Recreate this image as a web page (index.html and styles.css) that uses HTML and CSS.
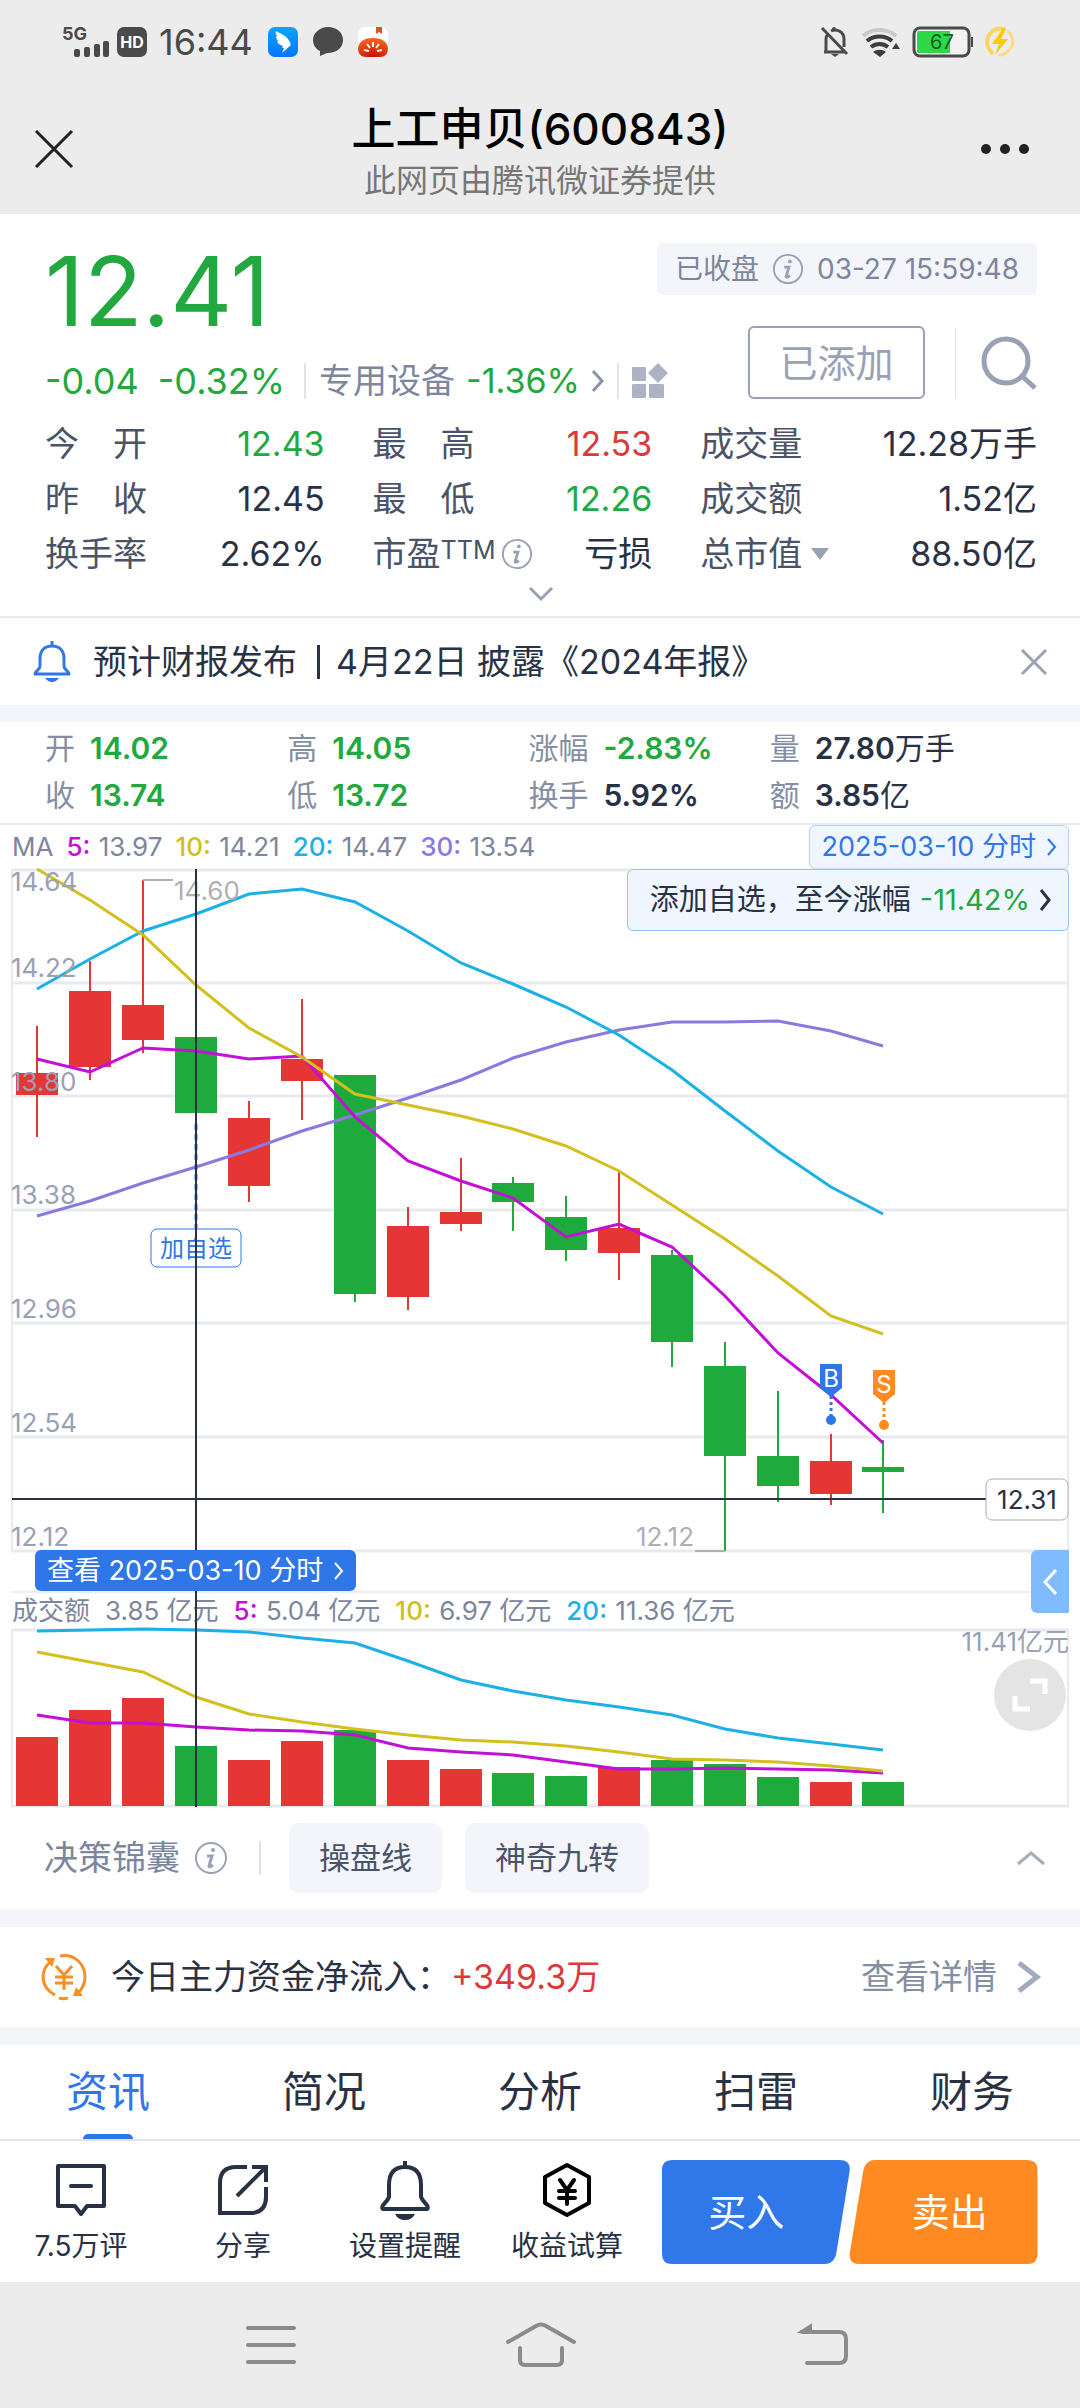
FILE: index.html
```html
<!DOCTYPE html>
<html lang="zh-CN">
<head>
<meta charset="utf-8">
<meta name="viewport" content="width=device-width">
<title>上工申贝(600843)</title>
<link rel="stylesheet" href="styles.css">
</head>
<body>
<header class="top">
  <div class="status">
    <div class="status-left">
      <svg class="signal" width="48" height="34" viewBox="0 0 48 34" fill="#4a4a4a"><text x="0" y="15" class="net">5G</text><rect x="12" y="24" width="6" height="8" rx="2"/><rect x="22" y="22" width="6" height="10" rx="2"/><rect x="32" y="19" width="6" height="13" rx="2"/><rect x="41" y="16" width="6" height="16" rx="2"/></svg>
      <span class="hd">HD</span>
      <span class="time">16:44</span>
      <svg width="30" height="30" viewBox="0 0 30 30"><defs><linearGradient id="bl" x2="0" y2="1"><stop stop-color="#0ba4ff"/><stop offset="1" stop-color="#0575ff"/></linearGradient></defs><rect width="30" height="30" rx="7" fill="url(#bl)"/><path fill="#fff" d="M8 4c3 2 9 4 12 8 2 3 3 4 2 5l1 1-9 8 2-5h-2l1-2c-3-1-5-2-6-5l2 1c-2-2-3-4-3-6l2 1c-2-2-3-4-2-6z"/></svg>
      <svg width="30" height="30" viewBox="0 0 30 30"><path fill="#4a4a4a" d="M15 0C7 0 0 6 0 13c0 5 3 9 7 11v5l7-3h1c8 0 15-5 15-13S23 0 15 0z"/></svg>
      <svg width="30" height="30" viewBox="0 0 30 30"><defs><radialGradient id="tm" cx=".5" cy="1" r=".9"><stop stop-color="#c60c00"/><stop offset="1" stop-color="#f2601c"/></radialGradient></defs><rect width="30" height="30" rx="7" fill="#fff"/><path d="M0 21C1 14 7 11 15 11s14 3 15 10c0 6-3 9-8 9H8c-5 0-8-3-8-9z" fill="url(#tm)"/><path d="M18 0h6v7l-3-2-3 2z" fill="#d9532c"/><path d="M15 15v5M9 17l3 4M21 17l-3 4M6 23l5 1M24 23l-5 1" stroke="#fff" stroke-width="2"/></svg>
    </div>
    <div class="status-right">
      <svg width="28" height="30" viewBox="0 0 28 30" fill="none" stroke="#4a4a4a" stroke-width="3"><path d="M3 25h21M5 24V12c0-2 1-4 2-5M10 4c6-3 13 1 13 8v8M1 1l25 26"/><path d="M10 27h8l-4 3z" fill="#4a4a4a" stroke="none"/><circle cx="13" cy="2" r="2" fill="#4a4a4a" stroke="none"/></svg>
      <svg width="40" height="30" viewBox="0 0 40 30" fill="none" stroke-width="4"><path d="M2 9c9-8 24-8 33 0" stroke="#c9c9c9"/><path d="M6 14c7-6 18-6 25 0M10 20c5-4 12-4 17 0" stroke="#3c3c3c"/><path d="M12 25c4-3 9-3 13 0l-6 5zM31 22l4-6 4 6z" fill="#3c3c3c"/></svg>
      <svg width="60" height="30" viewBox="0 0 60 30"><rect x="1" y="1" width="55" height="28" rx="6" fill="#f2f2f2" stroke="#4a4a4a" stroke-width="3"/><path d="M4 6q0-2 2-2h31v22H6q-2 0-2-2z" fill="#2bd845"/><rect x="58" y="10" width="2" height="10" fill="#4a4a4a"/><text x="17" y="22" class="batt">67</text></svg>
      <svg width="30" height="30" viewBox="0 0 30 30" fill="none"><path d="M18 2C10 0 2 7 2 15c0 5 3 9 6 12" stroke="#fbd65c" stroke-width="4"/><path d="M22 4c6 4 8 11 3 18-3 4-7 6-11 6" stroke="#fbdc80" stroke-width="3"/><path d="M19 0 7 17h7l-4 11 13-16h-7l5-10z" fill="#fecb00"/></svg>
    </div>
  </div>
  <div class="titlebar">
    <button class="plain" aria-label="关闭"><svg width="38" height="38" viewBox="0 0 38 38" stroke="#222" stroke-width="3"><path d="M1 1l36 36M37 1 1 37"/></svg></button>
    <div class="titles"><h1>上工申贝(600843)</h1><p>此网页由腾讯微证券提供</p></div>
    <button class="plain" aria-label="更多"><svg width="50" height="12" viewBox="0 0 50 12" fill="#222"><circle cx="6" cy="6" r="5"/><circle cx="25" cy="6" r="5"/><circle cx="44" cy="6" r="5"/></svg></button>
  </div>
</header>

<main>
<section class="quote">
  <div class="quote-top">
    <div class="quote-main">
      <div class="price">12.41</div>
      <div class="change">
        <span class="chg down">-0.04</span><span class="chg down">-0.32%</span>
        <a class="sector" href="#sector">专用设备 <span class="down">-1.36%</span>
          <svg width="14" height="24" viewBox="0 0 14 24" fill="none" stroke="#8a92a8" stroke-width="3"><path d="M2 2l9 10-9 10"/></svg></a>
        <button class="plain sep" aria-label="板块"><svg width="38" height="36" viewBox="0 0 38 36" fill="#adb3c4"><rect x="1" y="4" width="14" height="14" rx="1"/><path d="M27 0l10 10-10 10-10-10z"/><rect x="1" y="21" width="14" height="14" rx="1"/><rect x="18" y="21" width="15" height="14" rx="1"/></svg></button>
      </div>
    </div>
    <div class="quote-side">
      <div class="closed">已收盘 <svg class="info" width="32" height="32" viewBox="0 0 34 34"><use href="#i-info"/></svg> 03-27 15:59:48</div>
      <div class="side-row">
        <button class="added">已添加</button>
        <button class="plain search" aria-label="搜索"><svg width="56" height="54" viewBox="0 0 56 54" fill="none" stroke="#9aa1b5" stroke-width="5"><circle cx="25" cy="25" r="22"/><path d="M41 40l13 12"/></svg></button>
      </div>
    </div>
  </div>
  <dl class="facts">
    <div><dt>今　开</dt><dd class="down">12.43</dd></div>
    <div><dt>最　高</dt><dd class="up">12.53</dd></div>
    <div><dt>成交量</dt><dd>12.28万手</dd></div>
    <div><dt>昨　收</dt><dd>12.45</dd></div>
    <div><dt>最　低</dt><dd class="down">12.26</dd></div>
    <div><dt>成交额</dt><dd>1.52亿</dd></div>
    <div><dt>换手率</dt><dd>2.62%</dd></div>
    <div><dt>市盈<sup>TTM</sup> <svg class="info" width="32" height="32" viewBox="0 0 34 34"><use href="#i-info"/></svg></dt><dd>亏损</dd></div>
    <div><dt>总市值 <svg class="tri" width="18" height="12" viewBox="0 0 18 12"><path d="M0 0h18L9 12z" fill="#9aa1b5"/></svg></dt><dd>88.50亿</dd></div>
  </dl>
  <button class="plain expand" aria-label="展开"><svg width="24" height="14" viewBox="0 0 24 14" fill="none" stroke="#9aa1b5" stroke-width="3"><path d="M1 1l11 11L23 1"/></svg></button>
</section>

<section class="notice">
  <svg width="40" height="42" viewBox="0 0 40 42" fill="none" stroke="#2f77e8" stroke-width="3"><path d="M20 0v4M8 18C8 9 13 5 20 5s12 4 12 13v7c0 4 5 5 5 8H3c0-3 5-4 5-8z" stroke-linejoin="round"/><path d="M13 37h14q-3 4-7 4t-7-4z" fill="#2f77e8" stroke="none"/></svg>
  <a href="#report">预计财报发布<i></i>4月22日 披露《2024年报》</a>
  <button class="plain" aria-label="关闭提醒"><svg width="26" height="26" viewBox="0 0 26 26" stroke="#9aa1b5" stroke-width="3"><path d="M1 1l24 24M25 1 1 25"/></svg></button>
</section>

<section class="day">
  <div><span>开</span><b class="down">14.02</b></div>
  <div><span>高</span><b class="down">14.05</b></div>
  <div><span>涨幅</span><b class="down">-2.83%</b></div>
  <div><span>量</span><b>27.80<em>万手</em></b></div>
  <div><span>收</span><b class="down">13.74</b></div>
  <div><span>低</span><b class="down">13.72</b></div>
  <div><span>换手</span><b>5.92%</b></div>
  <div><span>额</span><b>3.85<em>亿</em></b></div>
</section>

<section class="chart">
  <div class="legend ma">
    <span>MA</span><span><b class="c5">5:</b> 13.97</span><span><b class="c10">10:</b> 14.21</span><span><b class="c20">20:</b> 14.47</span><span><b class="c30">30:</b> 13.54</span>
    <a class="date-link" href="#minute">2025-03-10 分时 <svg width="10" height="18" viewBox="0 0 10 18" fill="none" stroke="currentColor" stroke-width="2"><path d="M1 1l7 8-7 8"/></svg></a>
  </div>
  <div class="plot">
    <svg class="kline" viewBox="12 869 1057 681">
      <path class="grid" d="M12 870h1057M12 983h1057M12 1096h1057M12 1210h1057M12 1323h1057M12 1437h1057M12 1551h1057"/>
      <path class="frame" d="M12 869v682M1068 869v682"/>
      <path class="wick-r" d="M37 1026v111M90 961v119M143 880v173M249 1101v101M302 999v121M408 1207v103M461 1158v73M619 1171v109M831 1434v71"/>
      <path class="wick-g" d="M196 1029v84M355 1076v226M513 1177v54M566 1196v65M672 1250v117M725 1342v209M778 1391v111M883 1440v73"/>
      <path class="body-r" d="M16 1073h42v22h-42zM69 991h42v76h-42zM122 1005h42v35h-42zM228 1118h42v68h-42zM281 1059h42v22h-42zM387 1226h42v71h-42zM440 1212h42v12h-42zM598 1228h42v25h-42zM810 1461h42v33h-42z"/>
      <path class="body-g" d="M175 1037h42v76h-42zM334 1075h42v219h-42zM492 1183h42v19h-42zM545 1217h42v33h-42zM651 1255h42v87h-42zM704 1366h42v90h-42zM757 1456h42v30h-42zM862 1467h42v5h-42z"/>
      <polyline class="line c30" points="37,1216 90,1201 143,1183 196,1167 249,1150 302,1131 355,1115 408,1098 461,1080 513,1058 566,1042 619,1030 672,1022 725,1022 778,1021 831,1031 883,1046"/>
      <polyline class="line c20" points="37,989 90,959 143,931 196,914 249,894 302,889 355,902 408,931 461,963 513,984 566,1007 619,1035 672,1070 725,1111 778,1151 831,1187 883,1214"/>
      <polyline class="line c5" points="37,1059 90,1072 143,1048 196,1051 249,1059 302,1056 355,1117 408,1161 461,1181 513,1198 566,1237 619,1224 672,1247 725,1296 778,1353 831,1395 883,1443"/>
      <polyline class="line c10" points="37,869 90,900 143,935 196,985 249,1028 302,1057 355,1094 408,1105 461,1116 513,1129 566,1146 619,1171 672,1205 725,1239 778,1276 831,1316 883,1334"/>
      <path d="M143 880h30M695 1551h30" stroke="#b0b0b0" stroke-width="2"/>
      <g class="mark"><text x="174" y="900">14.60</text><text x="694" y="1546" text-anchor="end">12.12</text></g>
      <g class="axis"><text x="11" y="891">14.64</text><text x="11" y="977">14.22</text><text x="11" y="1091">13.80</text><text x="11" y="1204">13.38</text><text x="11" y="1318">12.96</text><text x="11" y="1432">12.54</text><text x="11" y="1546">12.12</text></g>
      <path d="M196 1124v104" stroke="#2f77e8" stroke-width="3" stroke-dasharray="6 4"/>
      <rect x="151" y="1229" width="90" height="38" rx="6" fill="#fff" stroke="#2f77e8"/>
      <text class="pick" x="196" y="1257" text-anchor="middle">加自选</text>
      <path d="M820 1364h22v24l-11 9-11-9z" fill="#2f77e8"/><path d="M831 1396v20" stroke="#2f77e8" stroke-width="3" stroke-dasharray="3 3"/><circle cx="831" cy="1420" r="5" fill="#2f77e8"/>
      <path d="M873 1370h22v24l-11 9-11-9z" fill="#ff8b22"/><path d="M884 1402v20" stroke="#ff8b22" stroke-width="3" stroke-dasharray="3 3"/><circle cx="884" cy="1425" r="5" fill="#ff8b22"/>
      <g class="flag"><text x="831" y="1387">B</text><text x="884" y="1393">S</text></g>
      <path d="M12 1499h975" stroke="#2a3142" stroke-width="2"/>
      <rect x="986" y="1479" width="82" height="41" rx="6" fill="#fff" stroke="#a7adbd"/>
      <text class="cursor" x="1027" y="1509" text-anchor="middle">12.31</text>
    </svg>
    <a class="tip" href="#watch">添加自选，至今涨幅 <span class="down">-11.42%</span> <svg width="13" height="22" viewBox="0 0 13 22" fill="none" stroke="currentColor" stroke-width="3"><path d="M2 1l8 10-8 10"/></svg></a>
  </div>
  <div class="between">
    <a class="view" href="#minute">查看 2025-03-10 分时 <svg width="10" height="18" viewBox="0 0 10 18" fill="none" stroke="currentColor" stroke-width="2"><path d="M1 1l7 8-7 8"/></svg></a>
    <button class="drawer" aria-label="收起"><svg width="16" height="28" viewBox="0 0 16 28" fill="none" stroke="#fff" stroke-width="3"><path d="M14 2 3 14l11 12"/></svg></button>
  </div>
  <div class="legend vol">
    <span>成交额</span><span>3.85 亿元</span><span><b class="c5">5:</b> 5.04 亿元</span><span><b class="c10">10:</b> 6.97 亿元</span><span><b class="c20">20:</b> 11.36 亿元</span>
  </div>
  <div class="plot">
    <svg class="kline" viewBox="12 1629 1057 178">
      <path class="grid" d="M12 1630h1057M12 1806h1057"/><path class="frame" d="M12 1629v178M1068 1629v178"/>
      <path class="body-r" d="M16 1737h42v69h-42zM69 1710h42v96h-42zM122 1698h42v108h-42zM228 1760h42v46h-42zM281 1741h42v65h-42zM387 1760h42v46h-42zM440 1769h42v37h-42zM598 1767h42v39h-42zM810 1782h42v24h-42z"/>
      <path class="body-g" d="M175 1746h42v60h-42zM334 1730h42v76h-42zM492 1773h42v33h-42zM545 1776h42v30h-42zM651 1760h42v46h-42zM704 1764h42v42h-42zM757 1777h42v29h-42zM862 1782h42v24h-42z"/>
      <polyline class="line c20" points="37,1631 90,1630 143,1629 196,1630 249,1632 302,1638 355,1643 408,1661 461,1680 513,1691 566,1700 619,1707 672,1715 725,1729 778,1738 831,1744 883,1750"/>
      <polyline class="line c5" points="37,1715 90,1723 143,1723 196,1727 249,1730 302,1731 355,1735 408,1748 461,1752 513,1755 566,1762 619,1769 672,1769 725,1768 778,1769 831,1770 883,1773"/>
      <polyline class="line c10" points="37,1652 90,1662 143,1672 196,1697 249,1714 302,1722 355,1729 408,1735 461,1740 513,1742 566,1746 619,1752 672,1759 725,1760 778,1762 831,1766 883,1771"/>
      <g class="axis"><text x="1069" y="1651" text-anchor="end">11.41亿元</text></g>
    </svg>
    <button class="full" aria-label="全屏"><svg width="36" height="36" viewBox="0 0 36 36" fill="none" stroke="#fff" stroke-width="5"><path d="M18 4h15v13M3 19v13h15"/></svg></button>
  </div>
  <div class="crosshair"></div>
</section>

<section class="tools">
  <span class="tools-name">决策锦囊 <svg class="info" width="34" height="34" viewBox="0 0 34 34"><g id="i-info"><circle cx="17" cy="17" r="15" fill="none" stroke="#9aa1b5" stroke-width="2"/><circle cx="19" cy="9" r="2" fill="#9aa1b5"/><path d="M13 15h5l-3 10q0 2 4-1" fill="none" stroke="#9aa1b5" stroke-width="3"/></g></svg></span>
  <button class="chip">操盘线</button><button class="chip">神奇九转</button>
  <button class="plain fold" aria-label="收起"><svg width="28" height="14" viewBox="0 0 28 14" fill="none" stroke="#a7adbd" stroke-width="3"><path d="M1 13 14 2l13 11"/></svg></button>
</section>

<section class="fund">
  <svg width="46" height="46" viewBox="0 0 46 46" fill="none" stroke="#f78f24" stroke-width="3"><path d="M9 8C-1 17-1 33 14 41M19 2c14-3 25 8 25 21 0 7-3 12-7 16M27 44c-3 1-6 1-9 0M15 12l8 9 8-9M14 23h18M14 29h18M23 21v15"/><path d="M4 4h10l-3 9zM42 42H32l3-9z" fill="#f78f24" stroke="none"/></svg>
  <span class="fund-text">今日主力资金净流入：<span class="up">+349.3万</span></span>
  <a href="#detail">查看详情 <svg width="26" height="32" viewBox="0 0 26 32" fill="none" stroke="#a2aabd" stroke-width="5"><path d="M3 2l18 14L3 30"/></svg></a>
</section>

<nav class="tabs"><a class="on" href="#news">资讯</a><a href="#brief">简况</a><a href="#analysis">分析</a><a href="#risk">扫雷</a><a href="#finance">财务</a></nav>
</main>

<footer class="actions">
  <button class="act"><svg width="54" height="60" viewBox="0 0 54 60" fill="none" stroke="#293145" stroke-width="4" stroke-linejoin="round"><path d="M4 5h46v40H33l-6 8-6-8H4z"/><path d="M17 25h20" stroke-linecap="round"/></svg>7.5万评</button>
  <button class="act"><svg width="54" height="60" viewBox="0 0 54 60" fill="none" stroke="#293145" stroke-width="4"><path d="M31 6H20Q4 6 4 22v30h30q16 0 16-16V26M36 6h14v15M49 7 21 35"/></svg>分享</button>
  <button class="act"><svg width="54" height="60" viewBox="0 0 54 60" fill="none" stroke="#293145" stroke-width="4" stroke-linejoin="round"><path d="M27 0v6M11 24Q11 6 27 6t16 18v12q1 3 5 7c3 3 2 5 0 5H6c-2 0-3-2 0-5q4-4 5-7z"/><path d="M17 53h20q-3 6-10 6t-10-6z" fill="#293145" stroke="none"/></svg>设置提醒</button>
  <button class="act"><svg width="54" height="60" viewBox="0 0 54 60" fill="none" stroke="#000" stroke-width="4" stroke-linejoin="round" stroke-linecap="round"><path d="M27 4 49 16v26L27 54 5 42V16zM20 19l7 10 7-10M19 30h16M19 37h16M27 30v13"/></svg>收益试算</button>
  <div class="trade">
    <button class="buy"><svg viewBox="0 0 189 104" preserveAspectRatio="none"><path d="M10 0H178q12 0 10 12L175 92q-2 12-12 12H10Q0 104 0 94V10Q0 0 10 0z" fill="#3077ea"/></svg><span>买入</span></button>
    <button class="sell"><svg viewBox="0 0 188 104" preserveAspectRatio="none"><path d="M26 0H178q10 0 10 10V94q0 10-10 10H10Q-1 104 1 92L14 12Q16 0 26 0z" fill="#ff8a21"/></svg><span>卖出</span></button>
  </div>
</footer>
<div class="sysnav">
  <button class="plain" aria-label="最近任务"><svg width="50" height="40" viewBox="0 0 50 40" stroke="#8b8b8b" stroke-width="4" stroke-linecap="round"><path d="M2 3h46M2 20h46M2 37h46"/></svg></button>
  <button class="plain" aria-label="主页"><svg width="70" height="44" viewBox="0 0 70 44" fill="none" stroke="#8b8b8b" stroke-width="4" stroke-linecap="round"><path d="M2 19 30 3q5-3 10 0l28 16M14 25v12q0 5 5 5h32q5 0 5-5V25"/></svg></button>
  <button class="plain" aria-label="返回"><svg width="52" height="42" viewBox="0 0 52 42" fill="none" stroke="#8b8b8b" stroke-width="4" stroke-linecap="round"><path d="M5 8h37q7 0 7 7v17q0 7-7 7H10"/><path d="M14 1v7H3z" fill="#8b8b8b" stroke-width="2"/></svg></button>
</div>
</body>
</html>
```
FILE: styles.css
```css
* { box-sizing: border-box; }
body {
  margin: 0;
  background: #fff;
  color: #293145;
  font-family: Inter, "Noto Sans CJK SC", sans-serif;
  font-size: 34px;
  line-height: 54px;
}
svg { display: block; flex: none; overflow: visible; }
a { color: inherit; text-decoration: none; }
button { font: inherit; color: inherit; border: 0; padding: 0; margin: 0; background: none; }
h1, p, dl, dd { margin: 0; font-weight: 400; }
b, em, i { font-style: normal; font-weight: inherit; }
.plain { display: flex; align-items: center; justify-content: center; }
.down { color: #21a83e; }
.up { color: #dc3a3a; }

.top { background: #ececec; }
.status { display: flex; justify-content: space-between; height: 84px; padding: 0 65px 0 62px; align-items: center; }
.status-left, .status-right { display: flex; align-items: center; color: #4a4a4a; }
.status-left { gap: 15px; }
.status-right { gap: 12px; }
.net { font-size: 18px; font-weight: 700; }
.batt { font-size: 20px; fill: #145c1e; }
.hd { margin: 0 -3px 0 -8px; width: 30px; height: 30px; border-radius: 7px; background: #4a4a4a; color: #fff; font-size: 16px; font-weight: 700; line-height: 30px; text-align: center; }
.time { font-size: 36px; }
.titlebar { display: grid; grid-template-columns: 50px 1fr 50px; align-items: center; height: 130px; padding: 0 50px 0 35px; color: #000; }
.titlebar .plain { justify-content: flex-start; }
.titles { padding: 12px 0 0 15px; text-align: center; line-height: 52px; }
.titles h1 { font-size: 44px; font-weight: 500; line-height: 52px; }
.titles p { font-size: 32px; color: #777; }

.quote { padding: 29px 43px 0 45px; border-bottom: 2px solid #e8eaf2; white-space: nowrap; }
.quote-top { display: flex; justify-content: space-between; }
.quote-main { flex: 1; min-width: 0; }
.price { font-size: 96px; line-height: 96px; color: #21a83e; }
.change { display: flex; align-items: center; margin-top: 16px; height: 52px; }
.chg { font-size: 36px; margin-right: 19px; }
.sector { display: flex; align-items: center; gap: 11px; border-left: 2px solid #e1e4ec; line-height: 36px; padding: 0 12px 0 13px; color: #7d869c; }
.sep { border-left: 2px solid #e1e4ec; height: 36px; padding-left: 12px; }
.quote-side { display: flex; flex-direction: column; align-items: flex-end; gap: 31px; }
.closed { display: flex; align-items: center; gap: 13px; height: 52px; padding: 0 18px; border-radius: 6px; background: #f4f5fa; color: #7d869c; font-size: 28px; }
.side-row { display: flex; align-items: center; }
.added { width: 177px; height: 73px; border: 2px solid #9aa1b5; border-radius: 6px; color: #9aa1b5; font-size: 38px; }
.search { margin-left: 30px; padding-left: 25px; height: 70px; border-left: 1px solid #e1e4ec; }
.facts { display: grid; grid-template-columns: 279fr 279fr 336fr; gap: 1px 48px; margin-top: 10px; }
.facts div { display: flex; justify-content: space-between; }
.facts dt { display: flex; align-items: center; color: #4a5368; }
.facts sup { margin-top: -8px; font-size: 25px; line-height: 34px; }
.facts .info { margin-left: 6px; }
.facts .tri { margin-left: 9px; }
.expand { width: 100%; height: 35px; padding-bottom: 10px; }

.notice { display: flex; align-items: center; height: 87px; padding: 0 33px 0 32px; }
.notice a { flex: 1; display: flex; align-items: center; margin-left: 21px; }
.notice i { width: 3px; height: 34px; margin: 0 16px 0 20px; background: #293145; }
.day { display: grid; grid-template-columns: 242fr 241fr 241fr 290fr; padding: 3px 20px 4px 45px; border-top: 17px solid #f4f5fa; border-bottom: 2px solid #e8eaf0; font-size: 30px; line-height: 47px; }
.day span { margin-right: 15px; color: #868ea3; }
.day b { font-weight: 600; }
.day em { font-weight: 400; }

.chart { position: relative; padding: 0 11px 0 12px; font-size: 26px; line-height: 36px; color: #7d869c; white-space: nowrap; }
.legend { display: flex; align-items: center; gap: 15px; }
.ma { height: 44px; gap: 13px; }
.vol { height: 38px; border-top: 2px solid #eceef4; }
.c5 { color: #c40fd6; }
.c10 { color: #d3bf20; }
.c20 { color: #1cb0e6; }
.c30 { color: #8a7ae0; }
.legend b { font-weight: 500; margin-right: 1px; }
.date-link { display: flex; align-items: center; gap: 11px; height: 44px; margin-left: auto; padding: 0 11px; border: 1px solid #b5cff0; border-radius: 6px; background: #eff6ff; color: #2f77e8; font-size: 27px; }
.plot { position: relative; }
.kline { width: 100%; height: auto; }
.grid { stroke: #e8eaf0; stroke-width: 3; }
.frame { stroke: #e8eaf0; stroke-width: 2; }
.wick-r { stroke: #e63535; stroke-width: 2; }
.wick-g { stroke: #1faa3d; stroke-width: 2; }
.body-r { fill: #e63535; }
.body-g { fill: #1faa3d; }
.line { fill: none; stroke: currentColor; stroke-width: 3; }
.axis { fill: #9aa1b5; }
.mark { fill: #b0b0b0; }
.pick { fill: #2f77e8; font-size: 24px; }
.flag { fill: #fff; font-size: 24px; text-anchor: middle; }
.cursor { fill: #293145; }
.tip { position: absolute; top: 0; right: 0; display: flex; align-items: center; gap: 9px; height: 62px; padding: 0 16px 0 22px; border: 1px solid #9dbfec; border-radius: 6px; background: #eff6ff; color: #293145; font-size: 29px; }
.between { display: flex; justify-content: space-between; height: 41px; padding-left: 23px; position: relative; z-index: 2; }
.view { display: flex; align-items: center; gap: 11px; padding: 0 12px; border-radius: 6px; background: #2f77e8; color: #fff; font-size: 27px; }
.drawer { display: flex; align-items: center; justify-content: center; width: 38px; height: 63px; border-radius: 6px 0 0 6px; background: #80baff; }
.full { position: absolute; right: 3px; top: 30px; width: 72px; height: 72px; border-radius: 50%; background: #e4e4e4; display: flex; align-items: center; justify-content: center; }
.crosshair { position: absolute; left: calc(12px + (100% - 23px) * 0.174); top: 44px; bottom: 0; width: 2px; margin-left: -1px; background: #2a3142; }

.tools { display: flex; align-items: center; height: 102px; padding: 0 35px 0 44px; }
.tools-name { display: flex; align-items: center; gap: 14px; color: #7d869c; line-height: 30px; padding-right: 31px; margin-right: 28px; border-right: 2px solid #dfe2ea; }
.chip { height: 70px; margin-right: 23px; padding: 0 30px; border-radius: 10px; background: #f4f5fa; color: #4a5368; font-size: 31px; }
.fold { margin-left: auto; }
.fund { display: flex; align-items: center; height: 136px; padding: 0 38px 0 41px; border: solid #f4f5fa; border-width: 18px 0; }
.fund-text { flex: 1; margin-left: 24px; }
.fund a { display: flex; align-items: center; gap: 19px; color: #868ea3; }
.tabs { display: grid; grid-template-columns: repeat(5, 1fr); border-bottom: 2px solid #e2e2e2; text-align: center; font-size: 42px; line-height: 94px; }
.tabs .on { color: #2f77e8; }
.tabs .on::after { content: ""; display: block; width: 50px; height: 5px; margin: -5px auto 0; border-radius: 5px 5px 0 0; background: #2f77e8; }

.actions { display: grid; grid-template-columns: repeat(4, 162fr) 432fr; height: 141px; }
.act { display: flex; flex-direction: column; align-items: center; padding-top: 20px; gap: 7px; font-size: 28px; line-height: 36px; white-space: nowrap; }
.trade { display: flex; padding: 19px 43px 18px 14px; color: #fff; font-size: 38px; }
.trade button { flex: 1; position: relative; }
.trade svg { position: absolute; inset: 0; width: 100%; height: 100%; }
.trade span { position: relative; }
.buy { margin-right: -1px; }
.sell { margin-left: -1px; }
.buy span { padding-right: 20px; }
.sell span { padding-left: 14px; }
.sysnav { display: grid; grid-template-columns: 270px 270px 294px; justify-content: center; padding-left: 26px; height: 126px; background: #ececec; }
```
